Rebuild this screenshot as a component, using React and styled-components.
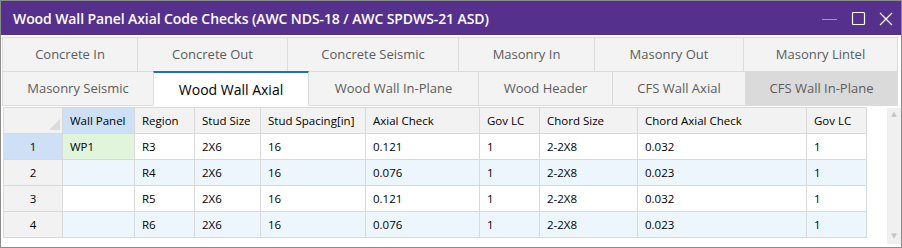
import React from 'react'
import styled, { createGlobalStyle } from 'styled-components'

const GlobalStyle = createGlobalStyle`
  html, body { margin: 0; padding: 0; background: #ffffff; }
  body { font-family: "Segoe UI", "Open Sans", "Noto Sans", sans-serif; }
  * { box-sizing: border-box; }
`

const rowOne = [
  { label: 'Concrete In', width: 136 },
  { label: 'Concrete Out', width: 151 },
  { label: 'Concrete Seismic', width: 172 },
  { label: 'Masonry In', width: 137 },
  { label: 'Masonry Out', width: 150 },
  { label: 'Masonry Lintel', width: 155 },
]

const rowTwo = [
  { label: 'Masonry Seismic', width: 152 },
  { label: 'Wood Wall Axial', width: 156, active: true },
  { label: 'Wood Wall In-Plane', width: 171 },
  { label: 'Wood Header', width: 135 },
  { label: 'CFS Wall Axial', width: 134 },
  { label: 'CFS Wall In-Plane', width: 153, hover: true },
]

const columns = [
  { label: '', width: 59 },
  { label: 'Wall Panel', width: 72, selected: true },
  { label: 'Region', width: 60 },
  { label: 'Stud Size', width: 66 },
  { label: 'Stud Spacing[in]', width: 105 },
  { label: 'Axial Check', width: 114 },
  { label: 'Gov LC', width: 60 },
  { label: 'Chord Size', width: 98 },
  { label: 'Chord Axial Check', width: 169 },
  { label: 'Gov LC', width: 60 },
]

const rows = [
  ['WP1', 'R3', '2X6', '16', '0.121', '1', '2-2X8', '0.032', '1'],
  ['', 'R4', '2X6', '16', '0.076', '1', '2-2X8', '0.023', '1'],
  ['', 'R5', '2X6', '16', '0.121', '1', '2-2X8', '0.032', '1'],
  ['', 'R6', '2X6', '16', '0.076', '1', '2-2X8', '0.023', '1'],
]

export default function App() {
  return (
    <>
      <GlobalStyle />
      <Window>
        <TitleBar>
          <Title>Wood Wall Panel Axial Code Checks (AWC NDS-18 / AWC SPDWS-21 ASD)</Title>
          <Controls>
            <svg width="16" height="16" viewBox="0 0 16 16">
              <line x1="0" y1="8.5" x2="15" y2="8.5" stroke="#a595cc" strokeWidth="1" />
            </svg>
            <svg width="15" height="15" viewBox="0 0 15 15">
              <rect x="1.5" y="1.5" width="12" height="12" rx="1" fill="none" stroke="#ffffff" strokeWidth="1.2" />
            </svg>
            <svg width="14" height="14" viewBox="0 0 14 14">
              <path d="M1 1 L13 13 M13 1 L1 13" stroke="#ffffff" strokeWidth="1.2" />
            </svg>
          </Controls>
        </TitleBar>

        <Tabs>
          <TabRow>
            {rowOne.map(t => (
              <Tab key={t.label} $w={t.width}>{t.label}</Tab>
            ))}
          </TabRow>
          <TabRow $second>
            {rowTwo.map(t => (
              <Tab key={t.label} $w={t.width} $active={t.active} $hover={t.hover}>{t.label}</Tab>
            ))}
          </TabRow>
        </Tabs>

        <Content>
          <Grid $cols={columns.map(c => c.width + 'px').join(' ')}>
            {columns.map((c, i) => (
              <HeadCell key={i} $selected={c.selected}>
                {i === 0 ? (
                  <Corner width="11" height="11" viewBox="0 0 11 11">
                    <polygon points="11,0 11,11 0,11" fill="#dadada" />
                  </Corner>
                ) : c.label}
              </HeadCell>
            ))}
            {rows.map((r, ri) => (
              <React.Fragment key={ri}>
                <RowHead $selected={ri === 0}>{ri + 1}</RowHead>
                {r.map((v, ci) => (
                  <Cell key={ci} $alt={ri % 2 === 1} $green={ri === 0 && ci === 0}>{v}</Cell>
                ))}
              </React.Fragment>
            ))}
          </Grid>
          <Scrollbar>
            <Arrow>▲</Arrow>
            <Arrow>▼</Arrow>
          </Scrollbar>
        </Content>
      </Window>
    </>
  )
}

const Window = styled.div`
  width: 902px;
  height: 248px;
  border: 1px solid #8c8c8c;
  background: #ffffff;
  display: flex;
  flex-direction: column;
  overflow: hidden;
`

const TitleBar = styled.div`
  height: 34px;
  flex: none;
  background: #55308d;
  display: flex;
  align-items: center;
  justify-content: space-between;
  padding: 0 8px 0 12px;
`

const Title = styled.div`
  color: #ffffff;
  font-family: "Open Sans", "Noto Sans", sans-serif;
  font-weight: 600;
  font-size: 14px;
  letter-spacing: -0.1px;
`

const Controls = styled.div`
  display: flex;
  align-items: center;
  gap: 13px;
  padding-top: 1px;
`

const Tabs = styled.div`
  margin: 2px 3px 0 1px;
  display: flex;
  flex-direction: column;
`

const TabRow = styled.div`
  display: flex;
  height: 35px;
  margin-top: ${p => (p.$second ? '-1px' : '0')};
`

const Tab = styled.div`
  width: ${p => p.$w}px;
  flex: none;
  margin-right: -1px;
  border: 1px solid #dcdcdc;
  border-top: ${p => (p.$active ? '2px solid #1f6fca' : '1px solid #dcdcdc')};
  border-bottom-color: ${p => (p.$active ? '#ffffff' : '#dcdcdc')};
  background: ${p => (p.$active ? '#ffffff' : p.$hover ? '#dadada' : '#f3f3f3')};
  color: ${p => (p.$active ? '#000000' : '#5c5c5c')};
  font-family: "Open Sans", "Noto Sans", sans-serif;
  font-size: ${p => (p.$active ? '14px' : '13px')};
  display: flex;
  align-items: center;
  justify-content: center;
  padding-bottom: ${p => (p.$active ? '0' : '1px')};
  position: relative;
  z-index: ${p => (p.$active ? 1 : 0)};
`

const Content = styled.div`
  flex: 1;
  display: flex;
  justify-content: space-between;
  padding: 1px 0 3px 2px;
`

const Grid = styled.div`
  display: grid;
  grid-template-columns: ${p => p.$cols};
  grid-auto-rows: 26px;
  align-self: flex-start;
  border-top: 1px solid #d9d9d9;
  border-left: 1px solid #d9d9d9;
  font-family: "Open Sans", "Noto Sans", sans-serif;
  font-size: 11.5px;
  color: #000000;
`

const CellBase = styled.div`
  border-right: 1px solid #d9d9d9;
  border-bottom: 1px solid #d9d9d9;
  display: flex;
  align-items: center;
  padding-left: 7px;
  white-space: nowrap;
`

const HeadCell = styled(CellBase)`
  background: ${p => (p.$selected ? '#cde0f6' : '#f2f2f2')};
  position: relative;
`

const Corner = styled.svg`
  position: absolute;
  right: 2px;
  bottom: 3px;
`

const RowHead = styled(CellBase)`
  justify-content: center;
  padding-left: 0;
  background: ${p => (p.$selected ? '#cde0f6' : '#f2f2f2')};
`

const Cell = styled(CellBase)`
  background: ${p => (p.$green ? '#e1f4dc' : p.$alt ? '#eef6fd' : '#ffffff')};
`

const Scrollbar = styled.div`
  width: 14px;
  margin-top: 1px;
  background: #f0f0f0;
  display: flex;
  flex-direction: column;
  justify-content: space-between;
  align-items: center;
  padding: 3px 0 4px;
`

const Arrow = styled.span`
  font-size: 7px;
  color: #c4c4c4;
  line-height: 1;
  font-family: "DejaVu Sans", sans-serif;
`
